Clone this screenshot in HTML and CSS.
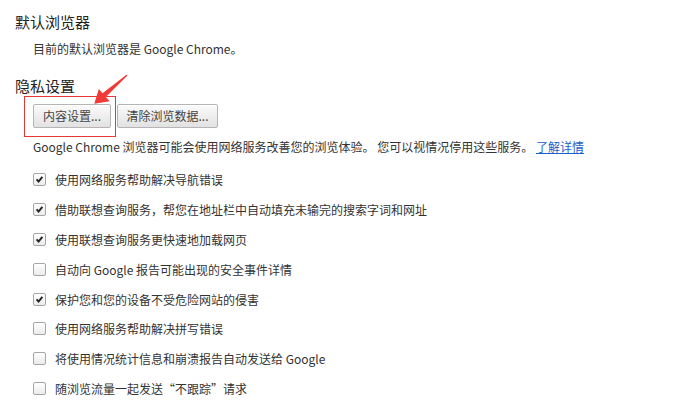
FILE: index.html
```html
<!DOCTYPE html>
<html lang="zh-CN">
<head>
<meta charset="utf-8">
<title>设置</title>
<link rel="stylesheet" href="styles.css">
</head>
<body>
<div class="page">
  <section class="section">
    <h3 class="section-title">默认浏览器</h3>
    <div class="section-body">
      <p class="text">目前的默认浏览器是 Google Chrome。</p>
    </div>
  </section>

  <section class="section privacy">
    <h3 class="section-title">隐私设置</h3>
    <div class="section-body">
      <div class="button-row">
        <button class="btn btn-content">内容设置...</button>
        <button class="btn btn-clear">清除浏览数据...</button>
      </div>
      <p class="text desc">Google Chrome 浏览器可能会使用网络服务改善您的浏览体验。 您可以视情况停用这些服务。 <a class="link" href="#">了解详情</a></p>
      <ul class="options">
        <li class="option"><span class="checkbox checked"><svg viewBox="0 0 13 13"><path d="M3 6.4 L5.4 8.9 L9.9 3.4" /></svg></span><span>使用网络服务帮助解决导航错误</span></li>
        <li class="option"><span class="checkbox checked"><svg viewBox="0 0 13 13"><path d="M3 6.4 L5.4 8.9 L9.9 3.4" /></svg></span><span>借助联想查询服务，帮您在地址栏中自动填充未输完的搜索字词和网址</span></li>
        <li class="option"><span class="checkbox checked"><svg viewBox="0 0 13 13"><path d="M3 6.4 L5.4 8.9 L9.9 3.4" /></svg></span><span>使用联想查询服务更快速地加载网页</span></li>
        <li class="option"><span class="checkbox"></span><span>自动向 Google 报告可能出现的安全事件详情</span></li>
        <li class="option"><span class="checkbox checked"><svg viewBox="0 0 13 13"><path d="M3 6.4 L5.4 8.9 L9.9 3.4" /></svg></span><span>保护您和您的设备不受危险网站的侵害</span></li>
        <li class="option"><span class="checkbox"></span><span>使用网络服务帮助解决拼写错误</span></li>
        <li class="option"><span class="checkbox"></span><span>将使用情况统计信息和崩溃报告自动发送给 Google</span></li>
        <li class="option"><span class="checkbox"></span><span>随浏览流量一起发送“不跟踪”请求</span></li>
      </ul>
    </div>
  </section>

  <div class="highlight-box"></div>
  <svg class="arrow" width="40" height="34" viewBox="90 72 40 34">
    <polygon points="127.5,75.6 105.8,97 109.6,101.2 94.3,103.7 98.8,89.1 102.5,93.2 126.5,74.8" />
  </svg>
</div>
</body>
</html>
```

FILE: styles.css
```css
html, body {
  margin: 0;
  padding: 0;
  background: #ffffff;
}

body {
  font-family: "Noto Sans CJK SC", "Noto Sans", sans-serif;
  color: #333333;
}

.page {
  position: relative;
  width: 675px;
  height: 410px;
  overflow: hidden;
  padding: 12px 0 0 15px;
  box-sizing: border-box;
}

.section-title {
  margin: 0;
  font-size: 15px;
  line-height: 20px;
  font-weight: normal;
  color: #222222;
}

.section-body {
  padding-left: 18px;
}

.text {
  margin: 8px 0 0;
  font-size: 12px;
  line-height: 18px;
}

.privacy {
  margin-top: 18px;
}

.button-row {
  display: flex;
  gap: 6px;
  margin-top: 8px;
}

.btn {
  font-family: inherit;
  font-size: 12px;
  color: #444444;
  height: 24px;
  padding: 0;
  white-space: nowrap;
  text-align: center;
  border: 1px solid #b5b5b5;
  border-radius: 2px;
  background: linear-gradient(#fbfbfb, #ececec 60%, #e2e2e2);
  box-shadow: inset 0 1px 0 #ffffff;
  line-height: 20px;
  box-sizing: border-box;
}

.btn-content {
  width: 78px;
}

.btn-clear {
  width: 101px;
}

.desc {
  margin-top: 10px;
}

.link {
  color: #1a5fcb;
  text-decoration: underline;
}

.options {
  list-style: none;
  margin: 9px 0 0;
  padding: 0;
}

.option {
  display: flex;
  align-items: center;
  height: 29.8px;
  font-size: 12px;
  color: #333333;
}

.checkbox {
  width: 13px;
  height: 13px;
  box-sizing: border-box;
  border: 1px solid #a6a6a6;
  border-radius: 2px;
  background: linear-gradient(#ffffff, #ebebeb);
  margin-right: 9px;
  flex: none;
  display: flex;
}

.checkbox svg {
  width: 11px;
  height: 11px;
}

.checkbox svg path {
  fill: none;
  stroke: #262626;
  stroke-width: 2.4;
  stroke-linecap: butt;
  stroke-linejoin: miter;
}

.highlight-box {
  position: absolute;
  left: 24px;
  top: 96px;
  width: 92px;
  height: 41px;
  box-sizing: border-box;
  border: 1px solid #e53935;
}

.arrow {
  position: absolute;
  left: 90px;
  top: 72px;
}

.arrow polygon {
  fill: #f03a37;
}
```
